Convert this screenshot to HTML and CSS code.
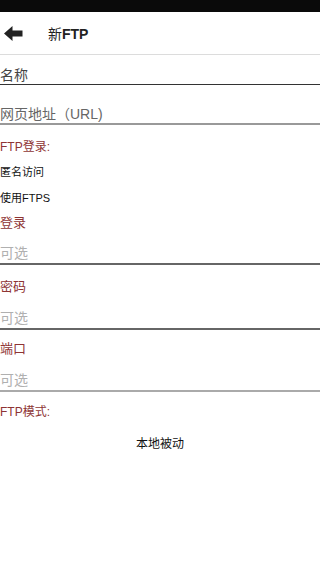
FILE: index.html
```html
<!DOCTYPE html>
<html lang="zh">
<head>
    <meta charset="UTF-8">
    <meta name="viewport" content="width=device-width, initial-scale=1.0">
    <title>新FTP</title>
    <link rel="stylesheet" href="styles.css">
</head>
<body>
 <div class="status-bar"></div>
 <div class="app-bar">
  <svg class="back" width="19" height="15" viewBox="0 0 19 15">
   <polygon points="0,7.5 8.5,0 8.5,4.5 18.5,4.5 18.5,10.5 8.5,10.5 8.5,15" fill="#222"/>
  </svg>
  <div class="title">新<b>FTP</b></div>
 </div>

 <div class="form">
  <div class="input input-name">名称</div>
  <div class="input input-url">网页地址（URL)</div>

  <div class="label label-login">FTP登录:</div>
  <div class="option option-anon">匿名访问</div>
  <div class="option option-ftps">使用FTPS</div>

  <div class="label label-user">登录</div>
  <div class="hint hint-user">可选</div>

  <div class="label label-pass">密码</div>
  <div class="hint hint-pass">可选</div>

  <div class="label label-port">端口</div>
  <div class="hint hint-port">可选</div>

  <div class="label label-mode">FTP模式:</div>
  <div class="mode">本地被动</div>
 </div>
</body>
</html>
```

FILE: styles.css
```css
body {
    margin: 0;
    background-color: #fff;
    font-family: "Liberation Sans", "Noto Sans CJK SC", sans-serif;
    overflow: hidden;
}
.status-bar {
    height: 12px;
    background-color: #0a0a0a;
}
.app-bar {
    height: 43px;
    border-bottom: 1px solid #dcdcdc;
    display: flex;
    align-items: center;
    box-sizing: border-box;
}
.back {
    margin-left: 4px;
    margin-top: 1px;
}
.title {
    margin-left: 25px;
    font-size: 14px;
    color: #222;
}
.title b {
    font-weight: bold;
}
.input {
    font-size: 14px;
}
.input-name {
    height: 19px;
    padding-top: 10px;
    line-height: 20px;
    color: #444;
    border-bottom: 1px solid #333;
}
.input-url {
    height: 18px;
    padding-top: 19px;
    line-height: 18px;
    color: #666;
    border-bottom: 2px solid #999;
    margin-top: 1px;
}
.label {
    font-size: 12px;
    line-height: 16px;
    color: #8e3434;
}
.label-login { padding-top: 14px; }
.label-user { padding-top: 9px; font-size: 13px; }
.label-pass { padding-top: 14px; font-size: 13px; }
.label-port { padding-top: 11px; font-size: 13px; }
.label-mode { padding-top: 12px; }
.option {
    font-size: 11px;
    line-height: 16px;
    color: #111;
}
.option-anon { padding-top: 9px; }
.option-ftps { padding-top: 10px; }
.hint {
    font-size: 14px;
    line-height: 20px;
    color: #b0b0b0;
}
.hint-user { padding-top: 12px; border-bottom: 2px solid #666; }
.hint-pass { padding-top: 13px; border-bottom: 2px solid #666; }
.hint-port { padding-top: 13px; border-bottom: 2px solid #aaa; }
.mode {
    padding-top: 16px;
    line-height: 16px;
    font-size: 12px;
    color: #111;
    text-align: center;
}
```
